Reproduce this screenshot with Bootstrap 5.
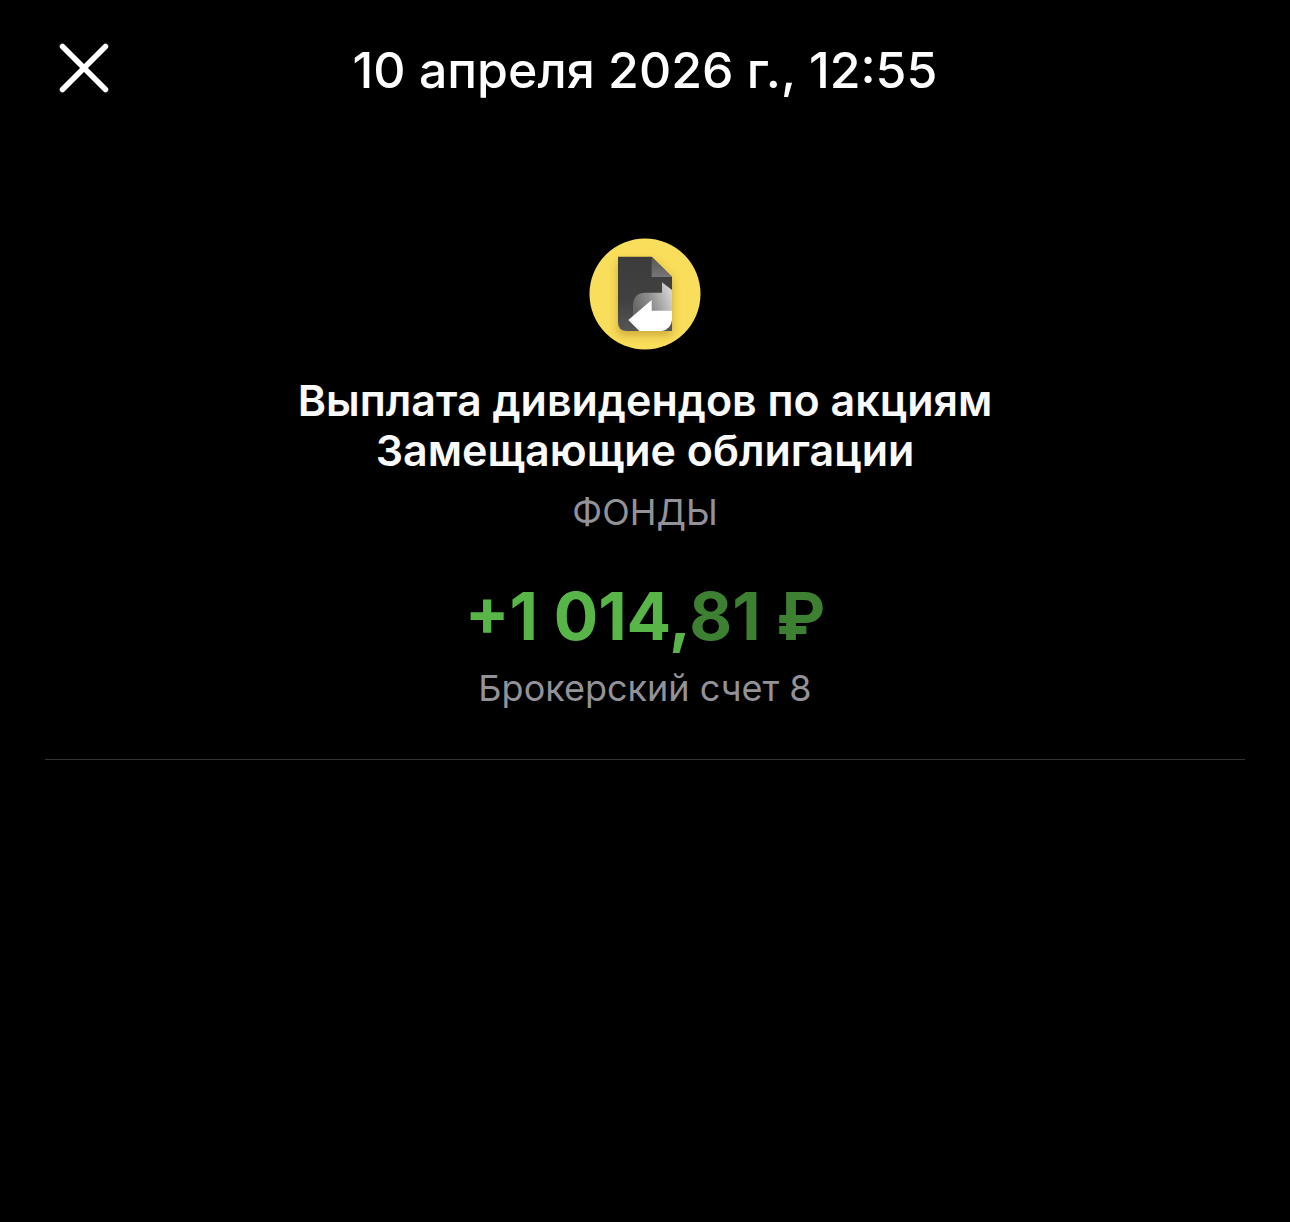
<!DOCTYPE html>
<html lang="ru" data-bs-theme="dark">
<head>
<meta charset="utf-8">
<meta name="viewport" content="width=device-width, initial-scale=1">
<title>Выплата дивидендов</title>
<link href="https://cdn.jsdelivr.net/npm/bootstrap@5.3.0/dist/css/bootstrap.min.css" rel="stylesheet">
<style>
body { background: #000; color: #fff; font-family: Inter, "Liberation Sans", sans-serif; }
.op-header { padding: 40px 56px 0; display: grid; grid-template-columns: 56px 1fr 56px; align-items: start; }
.op-close { width: 56px; height: 56px; line-height: 0; }
.op-date { font-size: 50px; line-height: 60px; font-weight: 500; }
.op-summary { padding: 138px 45px 0; }
.op-logo { width: 112px; height: 112px; }
.op-title { font-size: 43px; line-height: 50px; font-weight: 600; margin: 25px 0 0; color: #fafafa; }
.op-kind, .op-account { font-size: 36px; line-height: 44px; color: #929298; }
.op-kind { margin-top: 15px; }
.op-amount { font-size: 66px; line-height: 80px; font-weight: 700; color: #58b548; margin-top: 42px; }
.op-cents { color: #3d8032; }
.op-account { margin-top: 10px; }
.op-rule { border-color: #333; opacity: 1; margin: 49px 0 0; }
</style>
</head>
<body>
<header class="op-header">
<button type="button" class="op-close btn p-0 border-0" aria-label="Закрыть">
<svg width="56" height="56" viewBox="0 0 56 56" fill="none" stroke="#fff" stroke-width="5.500" stroke-linecap="round"><path d="M6.500 6.500 49.500 49.500M49.500 6.500 6.500 49.500"/></svg>
</button>
<h1 class="op-date text-center mb-0">10 апреля 2026 г., 12:55</h1>
</header>
<main class="op-summary text-center">
<svg class="op-logo" viewBox="0 0 112 112" aria-hidden="true">
<defs>
<linearGradient id="sheet" x1="0" y1="0" x2="0" y2="1"><stop offset="0" stop-color="#3c3c3c"/><stop offset=".6" stop-color="#414141"/><stop offset="1" stop-color="#555"/></linearGradient>
<linearGradient id="fold" x1="0" y1="0" x2="0" y2="1"><stop offset="0" stop-color="#555"/><stop offset="1" stop-color="#777"/></linearGradient>
<linearGradient id="back" x1="0" y1=".6" x2="1" y2=".3"><stop offset="0" stop-color="#686868"/><stop offset=".45" stop-color="#929292"/><stop offset="1" stop-color="#d6d6d6"/></linearGradient>
<filter id="soft" x="-40%" y="-40%" width="180%" height="180%"><feGaussianBlur stdDeviation="5"/></filter>
<clipPath id="disc"><circle cx="56" cy="56" r="55.500"/></clipPath>
</defs>
<circle cx="56" cy="56" r="55.500" fill="#f9de5b"/>
<g clip-path="url(#disc)"><path d="M29 24H66L83 42V97H29Z" fill="#a87b20" opacity=".55" filter="url(#soft)"/></g>
<path d="M29 18.700H62.700L83 39V93H38Q29 93 29 84Z" fill="url(#sheet)"/>
<path d="M62.700 18.700 83 39H62.700Z" fill="url(#fold)"/>
<path d="M73 44.300 83 52V73H62.700L44 78V68Q44 54.700 57 54.700H73Z" fill="url(#back)"/>
<path d="M39.300 82 62.700 62V72.700H83V82Q82 91 73 93H50.300Z" fill="#fff"/>
</svg>
<h2 class="op-title">Выплата дивидендов по акциям<br>Замещающие облигации</h2>
<div class="op-kind">ФОНДЫ</div>
<div class="op-amount">+1 014,<span class="op-cents">81 ₽</span></div>
<div class="op-account">Брокерский счет 8</div>
<hr class="op-rule">
</main>
<script src="https://cdn.jsdelivr.net/npm/bootstrap@5.3.0/dist/js/bootstrap.bundle.min.js"></script>
</body>
</html>
